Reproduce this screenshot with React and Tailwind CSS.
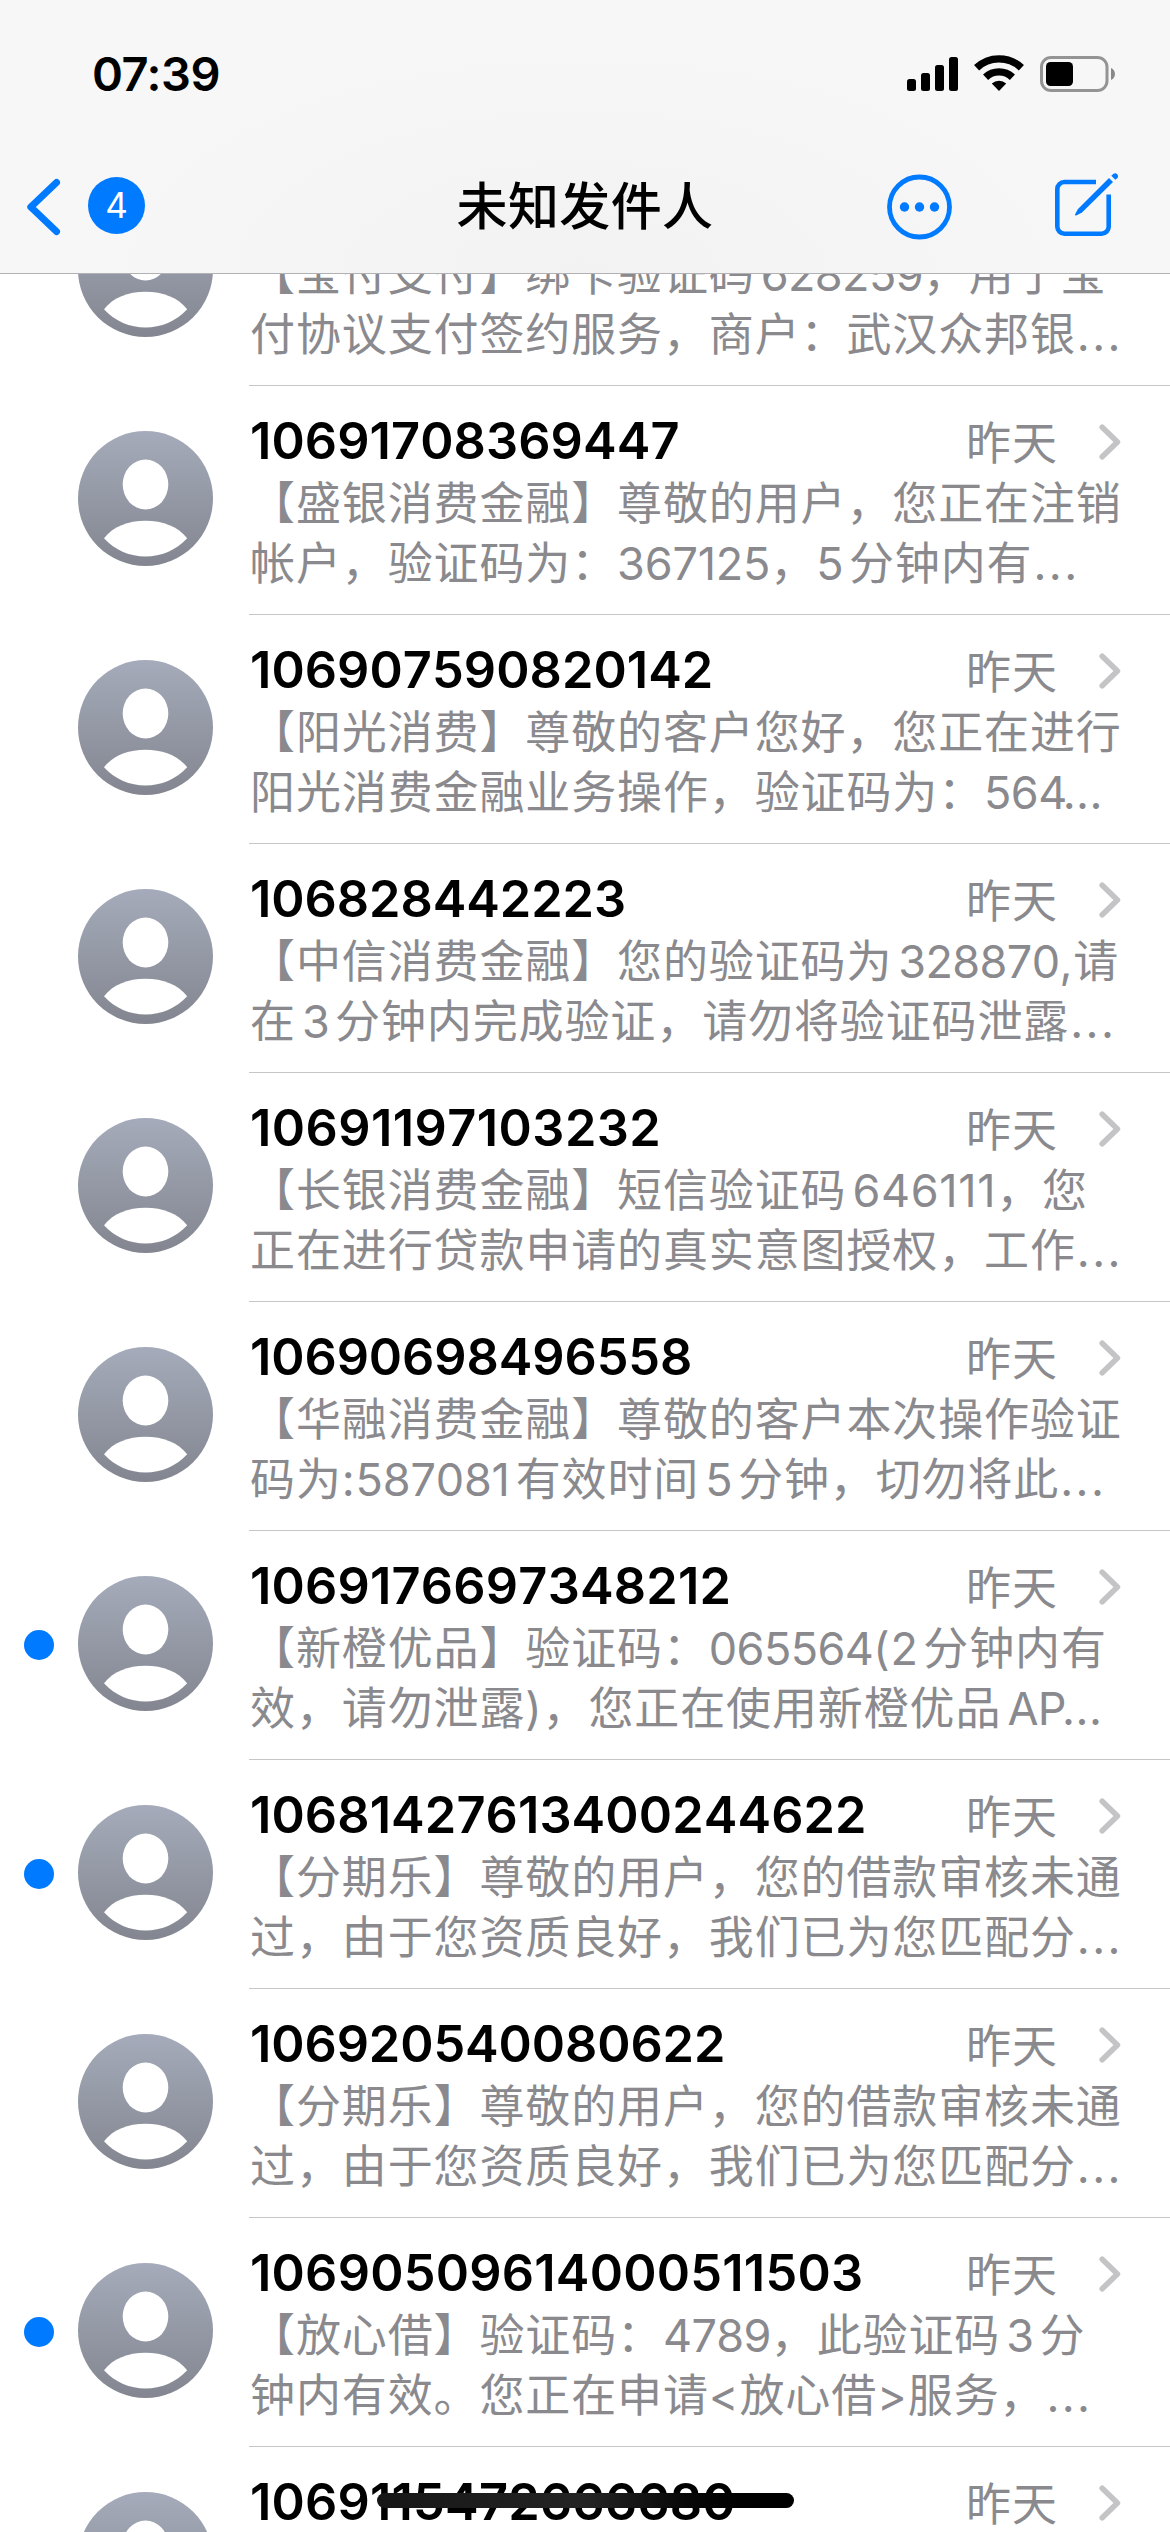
const messages = [
  { id: 1, sender: "", lines: ["【宝付支付】绑卡验证码628259，用于宝", "付协议支付签约服务，商户：武汉众邦银…"] },
  { id: 2, sender: "10691708369447", lines: ["【盛银消费金融】尊敬的用户，您正在注销", "帐户，验证码为：367125，5分钟内有…"] },
  { id: 3, sender: "106907590820142", lines: ["【阳光消费】尊敬的客户您好，您正在进行", "阳光消费金融业务操作，验证码为：564…"] },
  { id: 4, sender: "106828442223", lines: ["【中信消费金融】您的验证码为328870,请", "在3分钟内完成验证，请勿将验证码泄露…"] },
  { id: 5, sender: "10691197103232", lines: ["【长银消费金融】短信验证码646111，您", "正在进行贷款申请的真实意图授权，工作…"] },
  { id: 6, sender: "10690698496558", lines: ["【华融消费金融】尊敬的客户本次操作验证", "码为:587081有效时间5分钟，切勿将此…"] },
  { id: 7, sender: "1069176697348212", unread: true, lines: ["【新橙优品】验证码：065564(2分钟内有", "效，请勿泄露)，您正在使用新橙优品AP…"] },
  { id: 8, sender: "10681427613400244622", unread: true, lines: ["【分期乐】尊敬的用户，您的借款审核未通", "过，由于您资质良好，我们已为您匹配分…"] },
  { id: 9, sender: "106920540080622", lines: ["【分期乐】尊敬的用户，您的借款审核未通", "过，由于您资质良好，我们已为您匹配分…"] },
  { id: 10, sender: "10690509614000511503", unread: true, lines: ["【放心借】验证码：4789，此验证码3分", "钟内有效。您正在申请<放心借>服务，…"] },
  { id: 11, sender: "1069115472666680", lines: [] },
];

// Inter's "1" is narrow, so numbers with many of them are spaced a bit wider
function digitTracking(text, base) {
  const ones = text.split("1").length - 1;
  return `${(base + (ones * 2.5) / Math.max(text.length, 1)).toFixed(2)}px`;
}

// Latin runs get tighter tracking and a small gap next to Chinese characters
function PreviewLine({ text }) {
  const parts = text.split(/([0-9A-Za-z]+|…)/);
  return (
    <p className="h-[60px] leading-[60px] whitespace-nowrap tracking-[0.88px]">
      {parts.map((part, i) => {
        if (part === "…") {
          const afterLatin = parts[i - 1] === "";
          return <span key={i} className={afterLatin ? "tracking-[0.5px] -ml-[4px]" : "tracking-[2.4px] ml-px"}>...</span>;
        }
        if (i % 2 === 0) {
          return <span key={i}>{part}</span>;
        }
        const before = /[\u4e00-\u9fff]$/.test(parts[i - 1]);
        const after = /^[\u4e00-\u9fff]/.test(parts[i + 1]);
        return (
          <span
            key={i}
            className={`[font-kerning:none] ${before ? "ml-[6px]" : ""} ${after ? "mr-[6px]" : ""}`}
            style={{ letterSpacing: digitTracking(part, -0.6) }}
          >
            {part}
          </span>
        );
      })}
    </p>
  );
}

function Avatar() {
  return (
    <svg className="size-[135px] shrink-0" viewBox="0 0 135 135">
      <defs>
        <linearGradient id="avatar" x1="0" y1="0" x2="0" y2="1">
          <stop offset="0" stopColor="#a5abba" />
          <stop offset="1" stopColor="#838690" />
        </linearGradient>
      </defs>
      <circle cx="67.5" cy="67.5" r="67.5" fill="url(#avatar)" />
      <ellipse cx="67.5" cy="53.5" rx="22.8" ry="25" fill="#fff" />
      <path d="M26 107.3C35 95.5 50 89.7 67.5 89.7S100 95.5 109.2 107.3C98 119.5 83 125.5 67.5 125.5S37 119.5 26 107.3Z" fill="#fff" />
    </svg>
  );
}

function MessageRow({ message }) {
  return (
    <div className="flex h-[229px] shrink-0">
      <div className="flex h-[225px] w-[249px] shrink-0 items-center">
        <div className="w-[78px] pl-6 pt-[3px]">
          {message.unread && <div className="size-[30px] rounded-full bg-[#007aff]" />}
        </div>
        <Avatar />
      </div>
      <div className="flex-1 min-w-0 border-b border-[#c6c6c8] pt-6 pl-px text-[45px] text-[#8a8a8e]">
        <div className="flex h-[64px] items-center">
          <h2
            className="flex-1 -mt-[3px] text-[50.5px] leading-[60px] font-semibold text-black [font-kerning:none]"
            style={{ letterSpacing: digitTracking(message.sender, -0.28) }}
          >
            {message.sender}
          </h2>
          {message.sender && <span className="leading-[60px] tracking-[1px] mr-[41px] pt-[3px]">昨天</span>}
          <svg className="w-[22px] h-[36px] mr-[49px]" viewBox="0 0 22 36" fill="none" stroke="#c4c4c7" strokeWidth="5.6" strokeLinecap="round" strokeLinejoin="round">
            <path d="M3.2 3.2L18.4 18L3.2 32.8" />
          </svg>
        </div>
        {message.lines.map((line, i) => (
          <PreviewLine key={i} text={line} />
        ))}
      </div>
    </div>
  );
}

function StatusBar() {
  return (
    <div className="flex h-[141px] items-start justify-between pl-[92px] pr-[54px] pt-[46px]">
      <span className="text-[47px] leading-[56px] font-semibold text-black tracking-[-0.5px]">07:39</span>
      <svg className="w-[209px] h-[40px] mt-[7px]" viewBox="0 0 209 40">
        <rect x="0" y="26" width="9" height="12" rx="2.5" />
        <rect x="14" y="20" width="9" height="18" rx="2.5" />
        <rect x="28" y="12" width="9" height="26" rx="2.5" />
        <rect x="42" y="4" width="9" height="34" rx="2.5" />
        <g fill="none" stroke="#000" strokeWidth="7.4">
          <path d="M69.6 14.8A32.5 32.5 0 0 1 114.4 14.8" />
          <path d="M78.6 24.2A19.4 19.4 0 0 1 105.4 24.2" />
        </g>
        <path d="M84.8 30.6A10.8 10.8 0 0 1 99.2 30.6L92 38Z" />
        <rect x="134.5" y="4.5" width="65.5" height="33" rx="9.5" fill="none" stroke="#000" strokeOpacity="0.4" strokeWidth="3" />
        <rect x="139" y="9" width="27" height="24" rx="4.5" />
        <path d="M204 15C209.3 17 209.3 25 204 27Z" fillOpacity="0.45" />
      </svg>
    </div>
  );
}

function NavBar() {
  return (
    <div className="grid h-[132px] grid-cols-[1fr_auto_1fr] items-center">
      <div className="flex items-center pl-[26px]">
        <svg className="w-[36px] h-[58px]" viewBox="0 0 36 58" fill="none" stroke="#007aff" strokeWidth="7" strokeLinecap="round" strokeLinejoin="round">
          <path d="M30.5 4.5L4.8 29L30.5 53.5" />
        </svg>
        <span className="ml-[26px] -mt-[3px] flex size-[57px] items-center justify-center rounded-full bg-[#007aff] text-[35px] text-white">4</span>
      </div>
      <h1 className="text-[51px] leading-[76px] font-medium text-black tracking-[0.4px]">未知发件人</h1>
      <div className="flex items-center justify-end gap-[100px] pr-[49px]">
        <svg className="size-[66px]" viewBox="0 0 66 66" fill="#007aff">
          <circle cx="32.5" cy="33" r="30" fill="none" stroke="#007aff" strokeWidth="4.8" />
          <circle cx="17.5" cy="33" r="4.7" />
          <circle cx="32.5" cy="33" r="4.7" />
          <circle cx="47.5" cy="33" r="4.7" />
        </svg>
        <svg className="size-[68px] -mt-1" viewBox="0 0 68 68" fill="none" stroke="#007aff" strokeWidth="4.6">
          <path d="M43 11H11.5A7.2 7.2 0 0 0 4.3 18.2V55.5A7.2 7.2 0 0 0 11.5 62.7H48.5A7.2 7.2 0 0 0 55.7 55.5V23.5" />
          <path d="M56 7L60 11L29 41.5L23.3 44.5C22.5 44.8 21.8 44.2 22.1 43.3L25 38Z" fill="#007aff" stroke="none" />
          <path d="M58.3 4.7L60.5 2.7A3 3 0 0 1 64.5 7L62.3 8.8Z" fill="#007aff" stroke="none" />
        </svg>
      </div>
    </div>
  );
}

export default function App() {
  return (
    <div className="relative flex h-[2532px] w-[1170px] flex-col overflow-hidden bg-white font-['Inter','Noto_Sans_CJK_SC',sans-serif]">
      <header className="h-[274px] shrink-0 border-b border-[#b2b2b5] bg-[#f7f7f8] bg-[radial-gradient(ellipse_at_50%_100%,#f2f2f2_0%,#f7f7f8_65%)]">
        <StatusBar />
        <NavBar />
      </header>
      <main className="flex-1 overflow-hidden">
        <div className="-mt-[117px]">
          {messages.map((message) => (
            <MessageRow key={message.id} message={message} />
          ))}
        </div>
      </main>
      {/* Home indicator */}
      <div className="absolute bottom-6 left-[377px] h-[15px] w-[417px] rounded-full bg-linear-to-r from-[#161616] via-[#242424] to-black" />
    </div>
  );
}
